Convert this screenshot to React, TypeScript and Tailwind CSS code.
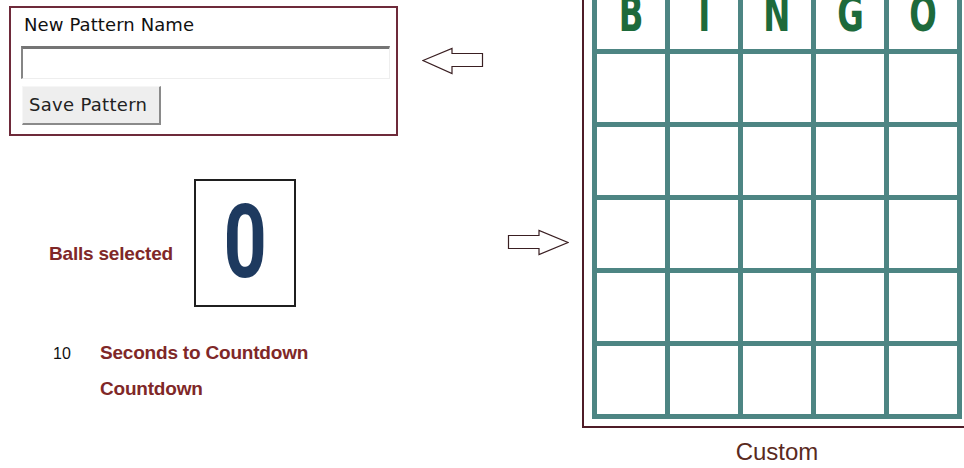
import React from "react";

const letters = ["B", "I", "N", "G", "O"];

function LeftArrow() {
  return (
    <svg width="62" height="28" viewBox="0 0 62 28" className="block">
      <polygon
        points="1,13.5 30,1.5 30,6.5 60.5,6.5 60.5,19.5 30,19.5 30,26.5"
        fill="#ffffff"
        stroke="#3a1f22"
        strokeWidth="1.2"
      />
    </svg>
  );
}

function RightArrow() {
  return (
    <svg width="62" height="27" viewBox="0 0 62 27" className="block">
      <polygon
        points="1.5,6.5 32,6.5 32,1.5 61,13.5 32,25.5 32,19.5 1.5,19.5"
        fill="#ffffff"
        stroke="#3a1f22"
        strokeWidth="1.2"
      />
    </svg>
  );
}

export default function App() {
  return (
    <div className="w-[964px] h-[468px] overflow-hidden bg-white flex items-start">
      {/* Left column */}
      <div className="w-[398px] shrink-0 pl-[9px] pt-[6px] flex flex-col">
        <div className="w-[389px] h-[130px] border-2 border-[#6e2a3a] flex flex-col">
          <div className="ml-[13px] mt-[6px] text-[18px] leading-[22px] text-[#111] font-['DejaVu_Sans',sans-serif] tracking-[0.1px]">
            New Pattern Name
          </div>
          <div className="ml-[10px] mt-[10px] w-[369px] h-[33px] bg-white border-t-[3px] border-l-[2px] border-t-[#757575] border-l-[#858585] border-b border-r border-b-[#eeeeee] border-r-[#eeeeee]" />
          <div className="ml-[11px] mt-[7px] w-[139px] h-[39px] bg-[#eeeeee] border-t border-l border-t-[#f6f6f6] border-l-[#f6f6f6] border-r-2 border-b-2 border-r-[#8a8a8a] border-b-[#8a8a8a] flex items-center pl-[6px]">
            <span className="text-[18px] leading-[20px] text-[#222] font-['DejaVu_Sans',sans-serif] tracking-[0.3px]">
              Save Pattern
            </span>
          </div>
        </div>

        <div className="mt-[43px] flex items-start">
          <div className="w-[185px] pl-[40px] mt-[64px] text-[19px] leading-[22px] font-bold text-[#7f2828] font-['Liberation_Sans',Arial,sans-serif] tracking-[-0.2px]">
            Balls selected
          </div>
          <div className="w-[102px] h-[128px] border-2 border-[#1f1f1f] flex items-center justify-center">
            <span className="block scale-x-[0.74] text-[102px] leading-[100px] font-bold text-[#1e3a5f] font-['Roboto',sans-serif] pb-[2px]">
              0
            </span>
          </div>
        </div>

        <div className="mt-[35px] flex items-baseline">
          <div className="w-[91px] pl-[44px] text-[16px] leading-[22px] text-[#111] font-['Liberation_Sans',Arial,sans-serif]">
            10
          </div>
          <div className="text-[19px] leading-[22px] font-bold text-[#7f2828] font-['Liberation_Sans',Arial,sans-serif] tracking-[-0.2px]">
            Seconds to Countdown
          </div>
        </div>
        <div className="mt-[13px] pl-[91px] text-[19px] leading-[22px] font-bold text-[#7f2828] font-['Liberation_Sans',Arial,sans-serif] tracking-[-0.2px]">
          Countdown
        </div>
      </div>

      {/* Middle column with arrows */}
      <div className="w-[184px] shrink-0 flex flex-col">
        <div className="ml-[24px] mt-[47px]">
          <LeftArrow />
        </div>
        <div className="ml-[109px] mt-[154px]">
          <RightArrow />
        </div>
      </div>

      {/* Right column: bingo card */}
      <div className="shrink-0 flex flex-col items-center">
        <div className="-mt-[33px] border-2 border-[#4f1c28] pt-[7px] pl-[8px] pr-[8px] pb-[7px]">
          <div className="grid grid-cols-[repeat(5,68px)] auto-rows-[68px] gap-[5px] p-[5px] bg-[#4d8583]">
            {letters.map((l) => (
              <div key={l} className="bg-white flex justify-center pt-[8px]">
                <span className="block scale-x-[0.72] text-[50px] leading-[50px] font-bold text-[#1d6a3b] font-['DejaVu_Sans_Condensed','DejaVu_Sans',sans-serif]">
                  {l}
                </span>
              </div>
            ))}
            {Array.from({ length: 25 }).map((_, i) => (
              <div key={i} className="bg-white" />
            ))}
          </div>
        </div>
        <div className="mt-[10px] text-[24px] leading-[28px] text-[#5a2a1e] font-['Liberation_Sans',Arial,sans-serif]">
          Custom
        </div>
      </div>
    </div>
  );
}
